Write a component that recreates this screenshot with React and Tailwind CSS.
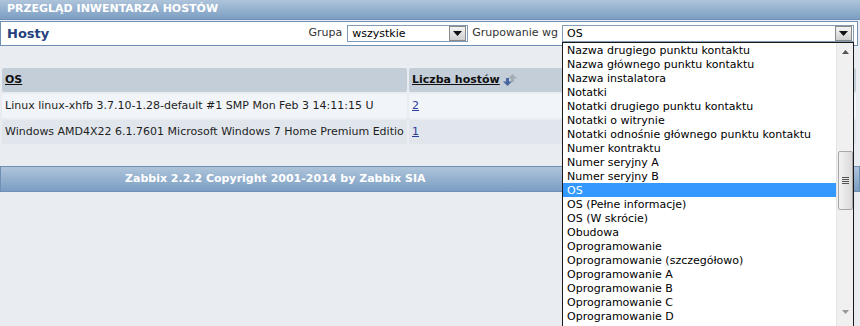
import React from "react";

const items = [
  "Nazwa drugiego punktu kontaktu",
  "Nazwa głównego punktu kontaktu",
  "Nazwa instalatora",
  "Notatki",
  "Notatki drugiego punktu kontaktu",
  "Notatki o witrynie",
  "Notatki odnośnie głównego punktu kontaktu",
  "Numer kontraktu",
  "Numer seryjny A",
  "Numer seryjny B",
  "OS",
  "OS (Pełne informacje)",
  "OS (W skrócie)",
  "Obudowa",
  "Oprogramowanie",
  "Oprogramowanie (szczegółowo)",
  "Oprogramowanie A",
  "Oprogramowanie B",
  "Oprogramowanie C",
  "Oprogramowanie D",
];

function ArrowBtn() {
  return (
    <div className="w-[17px] h-[15px] border border-[#8a8a8a] bg-gradient-to-b from-[#f4f4f4] to-[#cfcfcf] flex items-center justify-center">
      <svg width="9" height="5" viewBox="0 0 9 5">
        <path d="M0 0h9L4.5 5z" fill="#111" />
      </svg>
    </div>
  );
}

function Select({ value, width }) {
  return (
    <div
      className={`h-[17px] border border-[#7f9db9] bg-white flex items-center justify-between pl-[4px] pr-[1px] ${width}`}
    >
      <span className="leading-none text-[#000]">{value}</span>
      <ArrowBtn />
    </div>
  );
}

export default function App() {
  return (
    <div
      className="relative w-[860px] h-[326px] overflow-hidden bg-[#e9edf1] text-[11px] text-[#1e1e1e]"
      style={{ fontFamily: '"DejaVu Sans", Verdana, sans-serif' }}
    >
      <div className="h-[20px] bg-gradient-to-b from-[#aec4da] to-[#7c9ec3] border-b border-[#6f8fb4] flex items-center pl-[7px]">
        <span className="text-white font-bold text-[11px]">
          PRZEGLĄD INWENTARZA HOSTÓW
        </span>
      </div>
      <div className="mt-[1px] mr-[2px] h-[25px] bg-white border border-[#6f8fb4] flex items-center pl-[6px] pr-[3px]">
        <span className="font-bold text-[13px] text-[#24407e]">Hosty</span>
        <div className="ml-auto flex items-center">
          <span className="mr-[5px] text-[#333]">Grupa</span>
          <Select value="wszystkie" width="w-[121px]" />
          <span className="ml-[4px] mr-[4px] text-[#333]">Grupowanie wg</span>
          <Select value="OS" width="w-[292px]" />
        </div>
      </div>

      <div className="mt-[22px] ml-[2px] mr-[4px] flex flex-col gap-[2px]">
        <div className="flex gap-[2px] h-[24px]">
          <div className="w-[405px] bg-[#c3ced9] rounded-[2px] flex items-center pl-[3px]">
            <span className="font-bold underline text-[#111]">OS</span>
          </div>
          <div className="flex-1 bg-[#c3ced9] rounded-[2px] flex items-center pl-[3px]">
            <span className="font-bold underline text-[#111]">Liczba hostów</span>
            <svg width="18" height="16" viewBox="0 0 18 16" className="ml-[3px] -mt-[2px]">
              <path d="M9.5 3l4.5 4.5h-3V11h-3V7.5h-3z" fill="#a3acb6" />
              <path d="M3 7h3v3.5h3L4.5 15 0 10.5h3z" fill="#46679f" />
            </svg>
          </div>
        </div>
        <div className="flex gap-[2px] h-[24px]">
          <div className="w-[405px] bg-[#f1f4f8] rounded-[2px] flex items-center pl-[3px] overflow-hidden whitespace-nowrap">
            Linux linux-xhfb 3.7.10-1.28-default #1 SMP Mon Feb 3 14:11:15 U
          </div>
          <div className="flex-1 bg-[#f1f4f8] rounded-[2px] flex items-center pl-[3px]">
            <span className="underline text-[#2b3c9a]">2</span>
          </div>
        </div>
        <div className="flex gap-[2px] h-[24px]">
          <div className="w-[405px] bg-[#e1e6ed] rounded-[2px] flex items-center pl-[3px] overflow-hidden whitespace-nowrap">
            Windows AMD4X22 6.1.7601 Microsoft Windows 7 Home Premium Editio
          </div>
          <div className="flex-1 bg-[#e1e6ed] rounded-[2px] flex items-center pl-[3px]">
            <span className="underline text-[#2b3c9a]">1</span>
          </div>
        </div>
      </div>

      <div className="mt-[22px] h-[26px] bg-gradient-to-b from-[#aec4da] to-[#7c9ec3] border border-[#6f8fb4] flex items-center pl-[124px]">
        <span className="text-white font-bold">Zabbix 2.2.2 Copyright 2001-2014 by Zabbix SIA</span>
      </div>

      <div className="absolute left-[562px] top-[42px] w-[292px] h-[290px] bg-white border border-[#1a1a1a] flex">
        <div className="flex-1 flex flex-col">
          {items.map((t) => (
            <div
              key={t}
              className={`h-[14px] flex-none flex items-center pl-[4px] whitespace-nowrap leading-none ${
                t === "OS" ? "bg-[#3399ff] text-white" : "text-[#000]"
              }`}
            >
              {t}
            </div>
          ))}
        </div>
        <div className="w-[17px] bg-[#f0f0f0] border-l border-[#e4e4e4] flex flex-col items-center">
          <div className="h-[17px] flex items-center justify-center">
            <svg width="7" height="4" viewBox="0 0 7 4">
              <path d="M0 4h7L3.5 0z" fill="#555" />
            </svg>
          </div>
          <div className="mt-[91px] w-[15px] h-[59px] rounded-[2px] border border-[#a8a8a8] bg-gradient-to-r from-[#f2f2f2] to-[#dadada] flex flex-col items-center justify-center gap-[1px]">
            <div className="w-[7px] h-[1px] bg-[#555]" />
            <div className="w-[7px] h-[1px] bg-[#555]" />
            <div className="w-[7px] h-[1px] bg-[#555]" />
            <div className="w-[7px] h-[1px] bg-[#555]" />
          </div>
          <div className="mt-[93px] h-[17px] flex items-center justify-center">
            <svg width="7" height="4" viewBox="0 0 7 4">
              <path d="M0 0h7L3.5 4z" fill="#999" />
            </svg>
          </div>
        </div>
      </div>
    </div>
  );
}
